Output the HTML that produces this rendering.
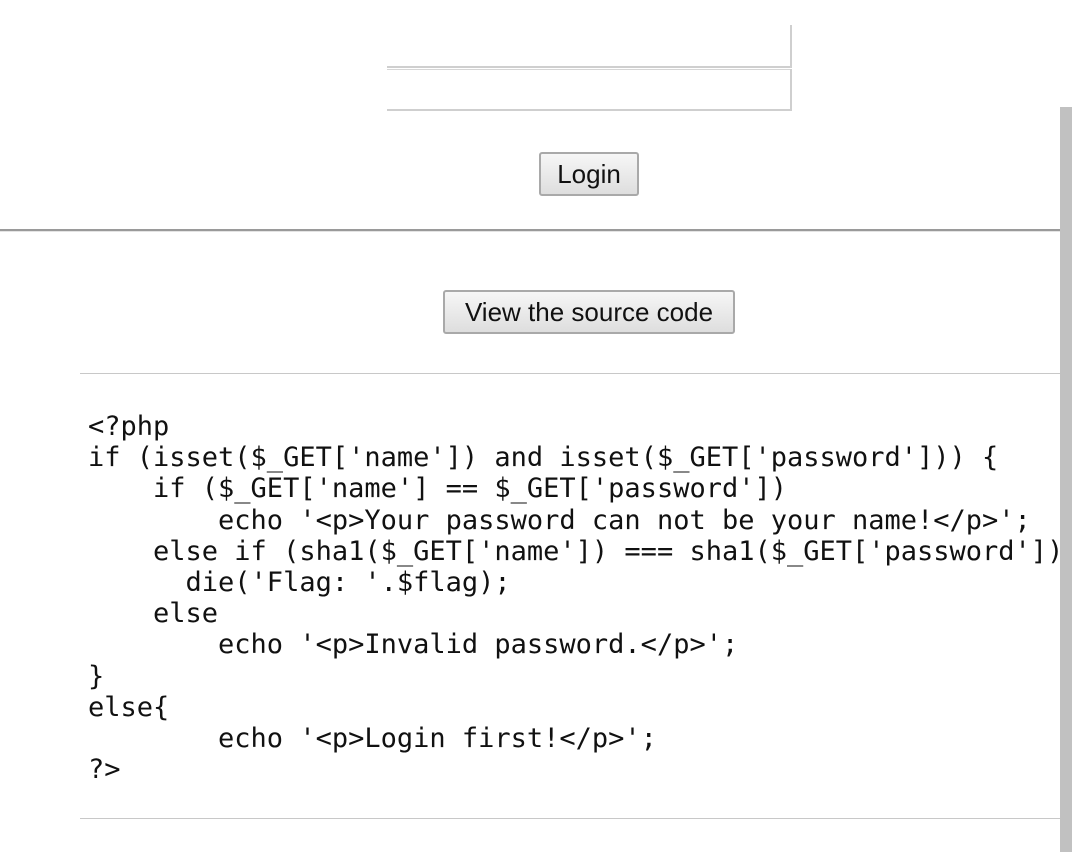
<!DOCTYPE html>
<html><head><meta charset="utf-8"><style>
html,body{margin:0;padding:0;background:#fff;width:1072px;height:852px;overflow:hidden;position:relative;font-family:"Liberation Sans",sans-serif}
.a{position:absolute}
.btn{position:absolute;box-sizing:border-box;border:2px solid #a9a9a9;border-radius:3px;background:linear-gradient(#f6f6f6,#dedede);font-size:26px;color:#111;text-align:center;font-family:"Liberation Sans",sans-serif}
pre{position:absolute;left:88px;top:411px;margin:0;font-family:"DejaVu Sans Mono",monospace;font-size:27px;line-height:31.2px;color:#111;white-space:pre}
</style></head><body>
<div class="a" style="left:790px;top:25px;width:2px;height:42px;background:#cfcfcf"></div>
<div class="a" style="left:387px;top:66px;width:405px;height:2px;background:#cfcfcf"></div>
<div class="a" style="left:387px;top:69px;width:405px;height:1px;background:#d6d6d6"></div>
<div class="a" style="left:790px;top:69px;width:2px;height:42px;background:#cfcfcf"></div>
<div class="a" style="left:387px;top:109px;width:405px;height:2px;background:#cfcfcf"></div>
<div class="btn" style="left:539px;top:152px;width:100px;height:44px;line-height:40px">Login</div>
<div class="a" style="left:0;top:229px;width:1072px;height:2px;background:#9a9a9a"></div>
<div class="a" style="left:0;top:231px;width:1072px;height:1px;background:#e4e4e4"></div>
<div class="btn" style="left:443px;top:290px;width:292px;height:44px;line-height:40px">View the source code</div>
<div class="a" style="left:80px;top:373px;width:992px;height:1px;background:#c8c8c8"></div>
<pre>&lt;?php
if (isset($_GET['name']) and isset($_GET['password'])) {
    if ($_GET['name'] == $_GET['password'])
        echo '&lt;p&gt;Your password can not be your name!&lt;/p&gt;';
    else if (sha1($_GET['name']) === sha1($_GET['password']))
      die('Flag: '.$flag);
    else
        echo '&lt;p&gt;Invalid password.&lt;/p&gt;';
}
else{
        echo '&lt;p&gt;Login first!&lt;/p&gt;';
?&gt;</pre>
<div class="a" style="left:80px;top:818px;width:992px;height:1px;background:#c8c8c8"></div>
<div class="a" style="left:1060px;top:107px;width:12px;height:745px;background:#c1c1c1"></div>
</body></html>
